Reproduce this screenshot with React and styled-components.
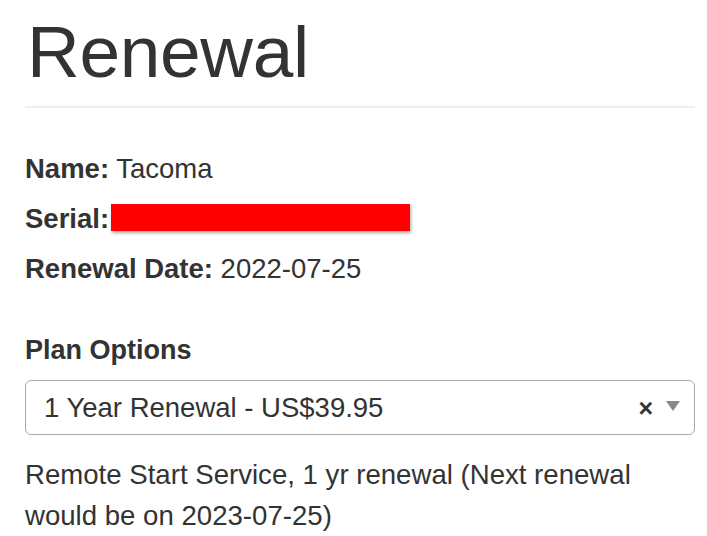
import React from 'react';
import styled, { createGlobalStyle } from 'styled-components';

const GlobalStyle = createGlobalStyle`
    body {
        margin: 0;
        background: #fff;
        font-family: "Liberation Sans", Arial, Helvetica, sans-serif;
        color: #333;
    }
`;

const Page = styled.div`
    padding: 12px 12px 0 25px;
    width: 707px;
    box-sizing: border-box;
`;

const Header = styled.div`
    border-bottom: 2px solid #eee;
    padding-bottom: 14px;
`;

const Title = styled.h1`
    margin: 0;
    padding-left: 2px;
    font-size: 73px;
    line-height: 80px;
    font-weight: 400;
    letter-spacing: -0.3px;
`;

const Details = styled.div`
    margin-top: 36px;
`;

const Row = styled.div`
    font-size: 27.5px;
    line-height: 50px;
    white-space: nowrap;

    b {
        font-weight: 700;
    }
`;

const Redacted = styled.span`
    display: inline-block;
    width: 299px;
    height: 27px;
    background: #f00;
    margin-left: 2px;
    vertical-align: -3px;
    box-shadow: 1px 2px 3px rgba(0, 0, 0, 0.35);
`;

const Label = styled.div`
    margin-top: 38px;
    font-size: 27px;
    line-height: 36px;
    font-weight: 700;
`;

const Select = styled.div`
    margin-top: 12px;
    height: 55px;
    box-sizing: border-box;
    border: 1px solid #aaa;
    border-radius: 6px;
    display: flex;
    align-items: center;
    padding: 0 14px 0 18px;
    font-size: 27.5px;
`;

const Value = styled.span`
    flex: 1;
`;

const Clear = styled.span`
    font-size: 25px;
    font-weight: 700;
    color: #333;
    margin-right: 13px;
    margin-top: 2px;
`;

const Arrow = styled.span`
    width: 0;
    height: 0;
    border-left: 7.5px solid transparent;
    border-right: 7.5px solid transparent;
    border-top: 10px solid #888;
    margin-top: -4px;
`;

const Description = styled.p`
    margin: 19px 0 0;
    font-size: 27.6px;
    line-height: 41px;
`;

const App = () => {
    return (
        <Page>
            <GlobalStyle />
            <Header>
                <Title>Renewal</Title>
            </Header>
            <Details>
                <Row><b>Name:</b> Tacoma</Row>
                <Row><b>Serial:</b><Redacted /></Row>
                <Row><b>Renewal Date:</b> 2022-07-25</Row>
            </Details>
            <Label>Plan Options</Label>
            <Select>
                <Value>1 Year Renewal - US$39.95</Value>
                <Clear>×</Clear>
                <Arrow />
            </Select>
            <Description>
                Remote Start Service, 1 yr renewal (Next renewal would be on 2023-07-25)
            </Description>
        </Page>
    );
}

export default App;
